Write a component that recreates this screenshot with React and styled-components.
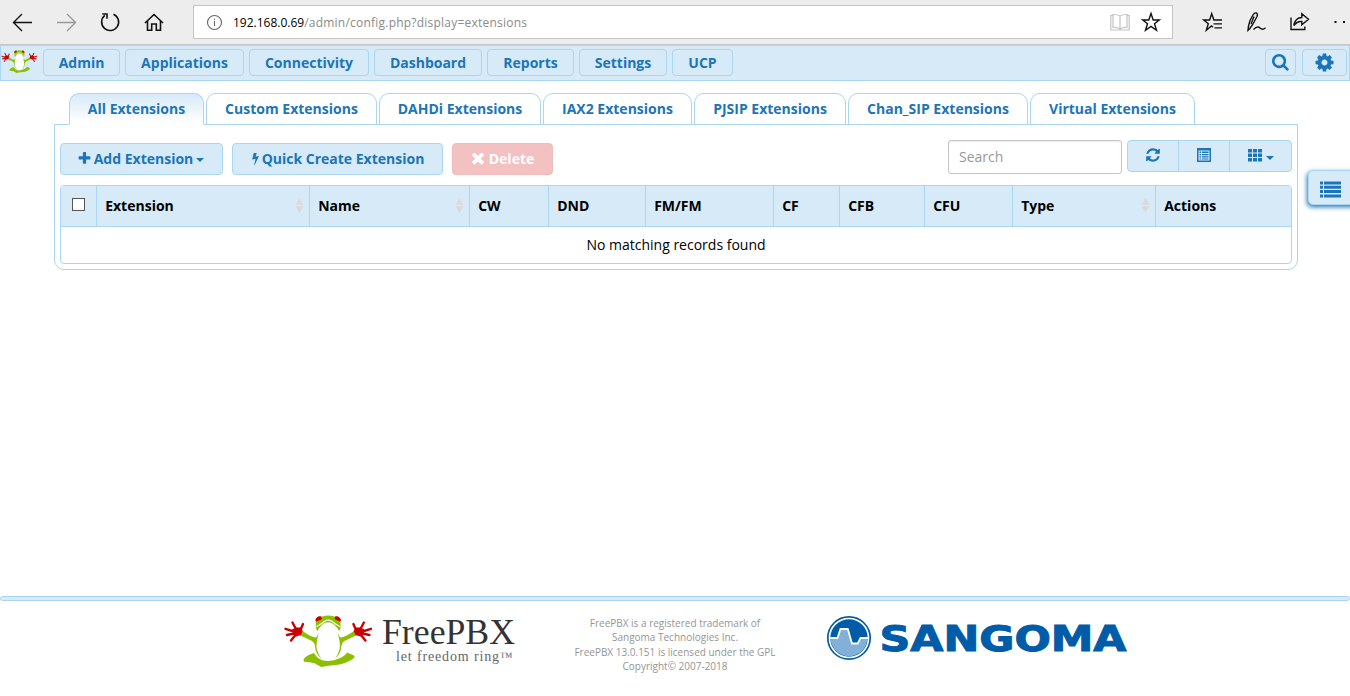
import React from "react";
import styled, { createGlobalStyle, css } from "styled-components";

const blue = "#1c75b8";
const pale = "#d7eaf8";
const line = "#aad6f1";

const GlobalStyle = createGlobalStyle`
  *, *::before, *::after { box-sizing: border-box; }
  html, body { margin: 0; padding: 0; background: #fff; overflow: hidden; }
  body { font-family: "Open Sans", "Noto Sans", sans-serif; font-size: 14px; line-height: 20px; color: #000; }
  button, input { font-family: inherit; }
`;

const Page = styled.div`
  display: flex;
  flex-direction: column;
  width: 1350px;
  height: 696px;
  overflow: hidden;
  position: relative;
`;

/* Browser bar */
const BrowserBar = styled.header`
  display: flex;
  align-items: flex-start;
  height: 45px;
  flex: none;
  background: #ededed;
  border-bottom: 1px solid #c8c8c8;
  overflow: hidden;
`;

const HistoryButtons = styled.div`
  display: flex;
  width: 193px;
  flex: none;
  padding: 11px 0 0 11px;
  gap: 20px;
`;

const Glyph = styled.svg`
  display: block;
  flex: none;
  width: ${(p) => p.$w || 24}px;
  height: ${(p) => p.$h || p.$w || 24}px;
  fill: none;
  stroke: ${(p) => p.$color || "#111"};
  stroke-width: ${(p) => p.$weight || 1.4};
`;

const AddressBar = styled.div`
  display: flex;
  flex: none;
  align-items: center;
  width: 980px;
  height: 34px;
  margin-top: 5px;
  padding: 0 9px 0 11px;
  background: #fff;
  border: 1px solid #c4c4c4;
`;

const Url = styled.div`
  flex: 1;
  margin-left: 10px;
  padding-top: 1px;
  font-size: 12px;
  color: #8a8a8a;
  white-space: nowrap;
`;

const Host = styled.span`
  color: #000;
`;

const UrlPath = styled.span`
  letter-spacing: 0.22px;
`;

const PageTools = styled.div`
  display: flex;
  align-items: center;
  gap: 9px;
`;

const BrowserTools = styled.div`
  display: flex;
  flex: none;
  gap: 19.5px;
  padding: 10px 0 0 28px;
`;

/* Main navigation */
const NavBar = styled.nav`
  display: flex;
  align-items: flex-start;
  gap: 5px;
  flex: none;
  height: 36px;
  padding: 3px 2px 0 0;
  background: ${pale};
  border: 1px solid ${line};
`;

const SmallFrog = styled.svg`
  display: block;
  width: 37px;
  height: 24px;
  margin: 1px 0 0 0;
`;

const NavButton = styled.button`
  display: flex;
  align-items: center;
  justify-content: center;
  width: ${(p) => p.$w}px;
  height: 27px;
  padding: 0;
  background: transparent;
  border: 1px solid ${line};
  border-radius: 4px;
  color: ${blue};
  font-size: 14px;
  font-weight: 700;
`;

const SearchButton = styled(NavButton)`
  margin-right: 1px;
`;

const NavSpacer = styled.div`
  flex: 1;
`;

const FaSvg = styled.svg`
  display: block;
  flex: none;
  width: ${(p) => p.$size}px;
  height: ${(p) => p.$size}px;
  fill: currentColor;
`;

/* Content */
const Main = styled.main`
  flex: 1;
  padding: 12px 52px 0 54px;
`;

const Tabs = styled.div`
  display: flex;
  gap: 2px;
  height: 32px;
  margin-bottom: -1px;
  padding-left: 15px;
  position: relative;
`;

const Tab = styled.div`
  width: ${(p) => p.$w}px;
  height: 32px;
  padding-top: 5px;
  text-align: center;
  color: ${blue};
  font-weight: 700;
  white-space: nowrap;
  border: 1px solid ${line};
  border-radius: 10px 10px 0 0;
  background: #fff;
  ${(p) =>
    p.$active &&
    css`
      border-bottom-color: #fff;
      background: linear-gradient(${pale}, #fff 95%);
    `}
`;

const Panel = styled.section`
  width: 1244px;
  height: 146px;
  padding: 15px 5px 0;
  border: 1px solid ${line};
  border-radius: 0 0 10px 10px;
`;

const Toolbar = styled.div`
  display: flex;
  align-items: flex-start;
  height: 45px;
`;

const Actions = styled.div`
  display: flex;
  flex: 1;
  gap: 9px;
  padding-top: 3px;
`;

const ActionButton = styled.button`
  display: flex;
  align-items: center;
  justify-content: center;
  gap: ${(p) => p.$gap || 0}px;
  width: ${(p) => p.$w}px;
  height: 32px;
  padding: 0 2px 2px 0;
  border: 1px solid ${(p) => (p.$danger ? "#efbcbc" : line)};
  border-radius: 4px;
  background: ${(p) => (p.$danger ? "#f3c1c1" : pale)};
  color: ${(p) => (p.$danger ? "#fff" : blue)};
  font-size: 14px;
  font-weight: 700;
  white-space: nowrap;
`;

const Caret = styled.span`
  width: 0;
  height: 0;
  margin: ${(p) => p.$margin || "4px 0 0 1px"};
  border: 4px solid transparent;
  border-top-color: currentColor;
  border-bottom: 0;
`;

const SearchInput = styled.input`
  width: 174px;
  height: 34px;
  margin-right: 5px;
  padding: 0 10px 2px;
  border: 1px solid #c6c6c6;
  border-radius: 3px;
  box-shadow: inset 0 1px 1px rgba(0, 0, 0, 0.075);
  font-size: 14px;
  outline: none;
  &::placeholder { color: #999; opacity: 1; }
`;

const ButtonGroup = styled.div`
  display: flex;
  width: 165px;
  height: 32px;
  border: 1px solid ${line};
  border-radius: 4px;
  background: ${pale};
`;

const GroupButton = styled.button`
  display: flex;
  align-items: flex-start;
  justify-content: center;
  width: ${(p) => p.$w}px;
  padding: ${(p) => p.$top || 7}px 0 0;
  border: 0;
  border-right: ${(p) => (p.$last ? "0" : `1px solid ${line}`)};
  background: transparent;
  color: ${blue};
`;

const Grid = styled.div`
  width: 1232px;
  height: 79px;
  border: 1px solid ${line};
  border-radius: 4px;
  overflow: hidden;
`;

const HeadRow = styled.div`
  display: flex;
  height: 41px;
  background: ${pale};
  border-bottom: 1px solid ${line};
`;

const HeadCell = styled.div`
  display: flex;
  align-items: center;
  justify-content: space-between;
  width: ${(p) => p.$w}px;
  padding: 0 5px 0 8.2px;
  font-weight: 700;
  border-right: ${(p) => (p.$last ? "0" : `1px solid ${line}`)};
`;

const CheckCell = styled(HeadCell)`
  padding: 0 0 3px 11px;
`;

const Checkbox = styled.span`
  width: 13px;
  height: 13px;
  background: #fff;
  border: 1px solid #555;
`;

const SortArrows = styled.svg`
  display: block;
  width: 9px;
  height: 15px;
  margin-top: -1px;
  fill: #dadada;
`;

const EmptyRow = styled.div`
  height: 36px;
  line-height: 36px;
  text-align: center;
`;

const SideToggle = styled.button`
  position: absolute;
  top: 170px;
  left: 1308px;
  display: flex;
  align-items: center;
  width: 48px;
  height: 35px;
  padding: 3px 0 0 11px;
  border: 1px solid ${line};
  border-radius: 5px 0 0 5px;
  background: ${pale};
  color: ${blue};
  box-shadow: -1px 2px 5px #1c75b8;
`;

/* Footer */
const FooterRule = styled.div`
  flex: none;
  height: 5px;
  background: ${pale};
  border: 1px solid ${line};
  border-radius: 3px;
`;

const Footer = styled.footer`
  display: flex;
  flex: none;
  height: 95px;
  padding: 13px 0 0 282px;
`;

const BrandLogo = styled.svg`
  display: block;
  width: 240px;
  height: 60px;
`;

const Legal = styled.p`
  width: 306px;
  margin: 2px 0 0;
  text-align: center;
  font-size: 10px;
  line-height: 14.3px;
  color: #959595;
`;

const SangomaLogo = styled.svg`
  display: block;
  width: 304px;
  height: 50px;
  margin-left: -3px;
`;

const faPaths = {
  search: "M1152 704q0-185-131.5-316.5t-316.5-131.5-316.5 131.5-131.5 316.5 131.5 316.5 316.5 131.5 316.5-131.5 131.5-316.5zm512 832q0 52-38 90t-90 38q-54 0-90-38l-343-342q-179 124-399 124-143 0-273.5-55.5t-225-150-150-225-55.5-273.5 55.5-273.5 150-225 225-150 273.5-55.5 273.5 55.5 225 150 150 225 55.5 273.5q0 220-124 399l343 343q37 37 37 90z",
  cog: "M1152 896q0-106-75-181t-181-75-181 75-75 181 75 181 181 75 181-75 75-181zm512-109v222q0 12-8 23t-20 13l-185 28q-19 54-39 91 35 50 107 138 10 12 10 25t-9 23q-27 37-99 108t-94 71q-12 0-26-9l-138-108q-44 23-91 38-16 136-29 186-7 28-36 28h-222q-14 0-24.5-8.5t-11.5-21.5l-28-184q-49-16-90-37l-141 107q-10 9-25 9-14 0-25-11-126-114-165-168-7-10-7-23 0-12 8-23 15-21 51-66.5t54-70.5q-27-50-41-99l-183-27q-13-2-21-12.5t-8-23.5v-222q0-12 8-23t19-13l186-28q14-46 39-92-40-57-107-138-10-12-10-24 0-10 9-23 26-36 98.5-107.5t94.5-71.5q13 0 26 10l138 107q44-23 91-38 16-136 29-186 7-28 36-28h222q14 0 24.5 8.5t11.5 21.5l28 184q49 16 90 37l142-107q9-9 24-9 13 0 25 10 129 119 165 170 7 8 7 22 0 12-8 23-15 21-51 66.5t-54 70.5q26 50 41 98l183 28q13 2 21 12.5t8 23.5z",
  plus: "M1600 736v192q0 40-28 68t-68 28h-416v416q0 40-28 68t-68 28h-192q-40 0-68-28t-28-68v-416h-416q-40 0-68-28t-28-68v-192q0-40 28-68t68-28h416v-416q0-40 28-68t68-28h192q40 0 68 28t28 68v416h416q40 0 68 28t28 68z",
  bolt: "M1333 566q18 20 7 44l-540 1157q-13 25-42 25-4 0-14-2-17-5-25.5-19t-4.5-30l197-808-406 101q-4 1-12 1-18 0-31-11-18-15-13-39l201-825q4-16 17-26t29-10h328q19 0 32 12.5t13 29.5q0 8-5 18l-171 463 396-98q8-2 12-2 19 0 34 15z",
  times: "M1490 1322q0 40-28 68l-136 136q-28 28-68 28t-68-28l-294-294-294 294q-28 28-68 28t-68-28l-136-136q-28-28-28-68t28-68l294-294-294-294q-28-28-28-68t28-68l136-136q28-28 68-28t68 28l294 294 294-294q28-28 68-28t68 28l136 136q28 28 28 68t-28 68l-294 294 294 294q28 28 28 68z",
  refresh: "M1639 1056q0 5-1 7-64 268-268 434.5t-478 166.5q-146 0-282.5-55t-243.5-157l-129 129q-19 19-45 19t-45-19-19-45v-448q0-26 19-45t45-19h448q26 0 45 19t19 45-19 45l-137 137q71 66 161 102t187 36q134 0 250-65t186-179q11-17 53-117 8-23 30-23h192q13 0 22.5 9.5t9.5 22.5zm25-800v448q0 26-19 45t-45 19h-448q-26 0-45-19t-19-45 19-45l138-138q-148-137-349-137-134 0-250 65t-186 179q-11 17-53 117-8 23-30 23h-199q-13 0-22.5-9.5t-9.5-22.5v-7q65-268 270-434.5t480-166.5q146 0 284 55.5t245 156.5l130-129q19-19 45-19t45 19 19 45z",
};

const FaIcon = ({ name, size, box = "0 0 1792 1792" }) => (
  <FaSvg $size={size} viewBox={box}>
    <path d={faPaths[name]} />
  </FaSvg>
);

/* One arm and one hand; the other side is the mirror image. */
const FrogSide = () => (
  <>
    <path fill="#8bbf00" d="M14 18.500 L18 15.500 Q25 21 31 22.500 Q33.500 22.500 34 18 L34.300 20 Q31.500 29 33 35 Q34.500 40 37.500 43.500 Q31.500 39.500 31 31 Q30.500 27.500 28 26 Q21 22.500 14 19.500Z" />
    <g fill="none" stroke="#c00" strokeWidth="2.400" strokeLinecap="round">
      <path d="M13 17.500 L1.500 13.800 M13 16 L8.500 7.500 M16 16 L19 9 M12 18 L3 20 M13 18 L7 25.500" />
    </g>
    <path fill="#c00" d="M8 14.500 L12 12.500 L17 12.500 L18.500 16 L17 20 L12 21.500 L9 19Z" />
  </>
);

const Frog = () => (
  <g>
    <FrogSide />
    <g transform="translate(88.400 0) scale(-1 1)"><FrogSide /></g>
    <path fill="#8bbf00" d="M32 12.500 L31.500 4 Q34 .5 38.500 1.500 Q44 -.5 50 1.500 Q54 .5 56.500 4 L56.500 12.500 Q56.500 14.500 55 16 Q53.500 12.500 50 9.500 Q44 5 38.400 9.500 Q35 12.500 33.500 16 Q32 14.500 32 12.500Z" />
    <path fill="none" stroke="#fff" strokeWidth="1.100" d="M32.500 11.800 Q38 8.500 41 6 Q44 4.300 47.400 6 Q50.500 8.500 56 11.800" />
    <path fill="#8bbf00" d="M19.500 44.500 Q22 40 30 38 Q33 43.500 39 45.500 Q48 47 55 43.500 Q61 41 63 37.500 L70 40.500 Q72 42.500 67 45 Q59 50 49 50.300 Q42 51 37.500 52 Q34 50 31 48.500 Q26 46.500 20 46.700Z" />
    <path fill="#c00" d="M31.500 5.500 Q32 1.500 36 1.300 Q38.500 2 37.500 4.500 L32.500 6.500Z" />
    <path fill="#c00" d="M57 5.500 Q56 1.500 52.400 1.300 Q50 2 51 4.500 L56 6.500Z" />
  </g>
);

const navItems = [
  ["Admin", 77],
  ["Applications", 119],
  ["Connectivity", 120],
  ["Dashboard", 108],
  ["Reports", 87],
  ["Settings", 88],
  ["UCP", 61],
];

const tabs = [
  ["All Extensions", 135],
  ["Custom Extensions", 171],
  ["DAHDi Extensions", 162],
  ["IAX2 Extensions", 149],
  ["PJSIP Extensions", 152],
  ["Chan_SIP Extensions", 180],
  ["Virtual Extensions", 165],
];

const columns = [
  ["Extension", 213, true],
  ["Name", 160, true],
  ["CW", 79],
  ["DND", 97],
  ["FM/FM", 128],
  ["CF", 66],
  ["CFB", 85],
  ["CFU", 88],
  ["Type", 143, true],
  ["Actions", 135],
];

export default function App() {
  return (
    <>
      <GlobalStyle />
      <Page>
        <BrowserBar>
          <HistoryButtons>
            <Glyph viewBox="0 0 24 24"><path d="M2.500 11.500H21 M11 3 L2.500 11.500 L11 20" /></Glyph>
            <Glyph viewBox="0 0 24 24" $color="#999"><path d="M2 11.500H20.500 M12 3 L20.500 11.500 L12 20" /></Glyph>
            <Glyph viewBox="0 0 24 24" $weight={1.6}><path d="M5.800 4.400A8.500 8.500 0 1 0 14.500 3.200 M3.300 3H8V7.800" /></Glyph>
            <Glyph viewBox="0 0 24 24" $weight={1.6}><path d="M2 12 L11 3.500 L20 12 M4.500 10V19.200H8.700V13H13.300V19.200H17.500V10" /></Glyph>
          </HistoryButtons>
          <AddressBar>
            <Glyph viewBox="0 0 18 18" $w={18} $color="#666" $weight={1.1}>
              <circle cx="9.500" cy="9.500" r="7" /><path d="M9.500 8V13 M9.500 5.500V6.800" />
            </Glyph>
            <Url><Host>192.168.0.69</Host><UrlPath>/admin/config.php?display=extensions</UrlPath></Url>
            <PageTools>
              <Glyph viewBox="0 0 20 20" $w={20} $color="#c4c4c4" $weight={1.2}>
                <path d="M3 3.500H.8V18H19.200V3.500H17 M10 4Q7 2.300 3 2.500V15.500Q7 15 10 17Q13 15 17 15.500V2.500Q13 2.300 10 4V17" />
              </Glyph>
              <Glyph viewBox="0 0 24 24" $weight={1.4}>
                <path d="M12 3.500 L14.200 10 H20.300 L15.500 13.800 L17.500 20.300 L12 16.400 L6.500 20.300 L8.500 13.800 L3.700 10 H9.800Z" />
              </Glyph>
            </PageTools>
          </AddressBar>
          <BrowserTools>
            <Glyph viewBox="0 0 24 24" $weight={1.4}>
              <path d="M12 17.200 L10.500 16 L5.300 20.300 L7.300 13.800 L2.700 10 H8.600 L10.700 3.700 L12.900 10 H21 M12.500 13.900H21 M13.500 17.900H21" />
            </Glyph>
            <Glyph viewBox="0 0 24 24" $weight={1.4}>
              <path d="M3.500 16 L5 10.500 L8 5 Q9.500 2.500 11.500 3 Q13 4 12 6.500 L8 14 L4.500 19 L3 20.300Z M9 6.500 L6 14 M8.500 19.500 Q12.500 15.500 15 18 Q17.500 20.500 20.500 17.800" />
            </Glyph>
            <Glyph viewBox="0 0 24 24" $weight={1.4}>
              <path d="M3 7.500V19.500H16.800V16.500 M5.800 15.500Q7.300 7.500 13.800 7.500V3.700L20.500 9.300L13.800 14.800V11.500Q9.300 11 5.800 15.500Z" />
            </Glyph>
            <Glyph viewBox="0 0 24 24"><path d="M2.500 12H4.500 M11 12H13" strokeWidth="2" /></Glyph>
          </BrowserTools>
        </BrowserBar>

        <NavBar>
          <SmallFrog viewBox="-1 0 91 54" preserveAspectRatio="none">
            <path fill="#fff" d="M34 13 Q44 2 54.500 13 L55 24 Q57 36 53 41 Q44 48 35.500 41 Q31.500 36 33.500 24Z" />
            <Frog />
          </SmallFrog>
          {navItems.map(([label, w]) => <NavButton key={label} $w={w}>{label}</NavButton>)}
          <NavSpacer />
          <SearchButton $w={31} aria-label="Search"><FaIcon name="search" size={18} /></SearchButton>
          <NavButton $w={45} aria-label="Settings menu"><FaIcon name="cog" size={21} /></NavButton>
        </NavBar>

        <Main>
          <Tabs>
            {tabs.map(([label, w], i) => <Tab key={label} $w={w} $active={i === 0}>{label}</Tab>)}
          </Tabs>
          <Panel>
            <Toolbar>
              <Actions>
                <ActionButton $w={163} $gap={2}><FaIcon name="plus" size={15} />Add Extension<Caret /></ActionButton>
                <ActionButton $w={211}>
                  <FaIcon name="bolt" size={13} box="350 0 1092 1792" />Quick Create Extension
                </ActionButton>
                <ActionButton $w={101} $gap={2} $danger><FaIcon name="times" size={18} />Delete</ActionButton>
              </Actions>
              <SearchInput placeholder="Search" />
              <ButtonGroup>
                <GroupButton $w={51} $top={6}><FaIcon name="refresh" size={16} /></GroupButton>
                <GroupButton $w={51}>
                  <FaSvg $size={14} viewBox="0 0 14 14">
                    <path fillRule="evenodd" d="M0 0H14V14H0Z M1.500 2.500V12.500H12.500V2.500Z M2.500 3.500H4V5H2.500Z M5 3.500H11.500V5H5Z M2.500 6H4V7.200H2.500Z M5 6H11.500V7.200H5Z M2.500 8.200H4V9.400H2.500Z M5 8.200H11.500V9.400H5Z M2.500 10.400H4V11.600H2.500Z M5 10.400H11.500V11.600H5Z" />
                  </FaSvg>
                </GroupButton>
                <GroupButton $w={61} $last>
                  <FaSvg $size={14} viewBox="0 0 14 14">
                    <path d="M0 1H4V4.500H0Z M5 1H9V4.500H5Z M10 1H14V4.500H10Z M0 5.500H4V9H0Z M5 5.500H9V9H5Z M10 5.500H14V9H10Z M0 10H4V13.500H0Z M5 10H9V13.500H5Z M10 10H14V13.500H10Z" />
                  </FaSvg>
                  <Caret $margin="8px 0 0 4px" />
                </GroupButton>
              </ButtonGroup>
            </Toolbar>
            <Grid>
              <HeadRow>
                <CheckCell $w={36}><Checkbox /></CheckCell>
                {columns.map(([label, w, sortable], i) => (
                  <HeadCell key={label} $w={w} $last={i === columns.length - 1}>
                    {label}
                    {sortable && (
                      <SortArrows viewBox="0 0 9 15"><path d="M4.500 0L8.500 6.700H.5Z M.5 8.300H8.500L4.500 15Z" /></SortArrows>
                    )}
                  </HeadCell>
                ))}
              </HeadRow>
              <EmptyRow>No matching records found</EmptyRow>
            </Grid>
          </Panel>
        </Main>

        <SideToggle aria-label="Show list">
          <FaSvg $size={21} viewBox="0 0 21 21">
            <path d="M0 2.500H3V5.500H0Z M4 2.500H21V5.500H4Z M0 6.800H3V9.800H0Z M4 6.800H21V9.800H4Z M0 11.100H3V14.100H0Z M4 11.100H21V14.100H4Z M0 15.400H3V18.400H0Z M4 15.400H21V18.400H4Z" />
          </FaSvg>
        </SideToggle>

        <FooterRule />
        <Footer>
          <BrandLogo viewBox="-2 0 240 60">
            <g transform="translate(0 1)"><Frog /></g>
            <text x="98" y="29.500" fontFamily="Liberation Serif, serif" fontSize="35" fill="#333" textLength="133" lengthAdjust="spacingAndGlyphs">FreePBX</text>
            <text x="112" y="47" fontFamily="Liberation Serif, serif" fontSize="14" fill="#666" textLength="103" lengthAdjust="spacing">let freedom ring</text>
            <text x="216" y="47" fontFamily="Liberation Serif, serif" fontSize="13" fill="#666">™</text>
          </BrandLogo>
          <Legal>
            FreePBX is a registered trademark of<br />
            Sangoma Technologies Inc.<br />
            FreePBX 13.0.151 is licensed under the GPL<br />
            Copyright© 2007-2018
          </Legal>
          <SangomaLogo viewBox="0 0 304 50">
            <circle cx="24" cy="24" r="21.200" fill="#fff" stroke="#005ca9" strokeWidth="1.700" />
            <circle cx="24" cy="24" r="18.700" fill="#005ca9" />
            <path fill="#82b0d8" d="M5.500 24.500H13L16 15.500H22.500L27 30H33L35.500 24.500H42.500Q41 40 24 42.700Q7 40 5.500 24.500Z" />
            <path fill="none" stroke="#fff" strokeWidth="1.800" d="M5 24H12.500L15.500 15H22.800L27 29.500H32.800L35.500 24H43" />
            <text x="54.500" y="37" fontFamily="DejaVu Sans, sans-serif" fontWeight="700" fontSize="35" fill="#005ca9" stroke="#005ca9" strokeWidth="1" textLength="247" lengthAdjust="spacingAndGlyphs">SANGOMA</text>
          </SangomaLogo>
        </Footer>
      </Page>
    </>
  );
}
